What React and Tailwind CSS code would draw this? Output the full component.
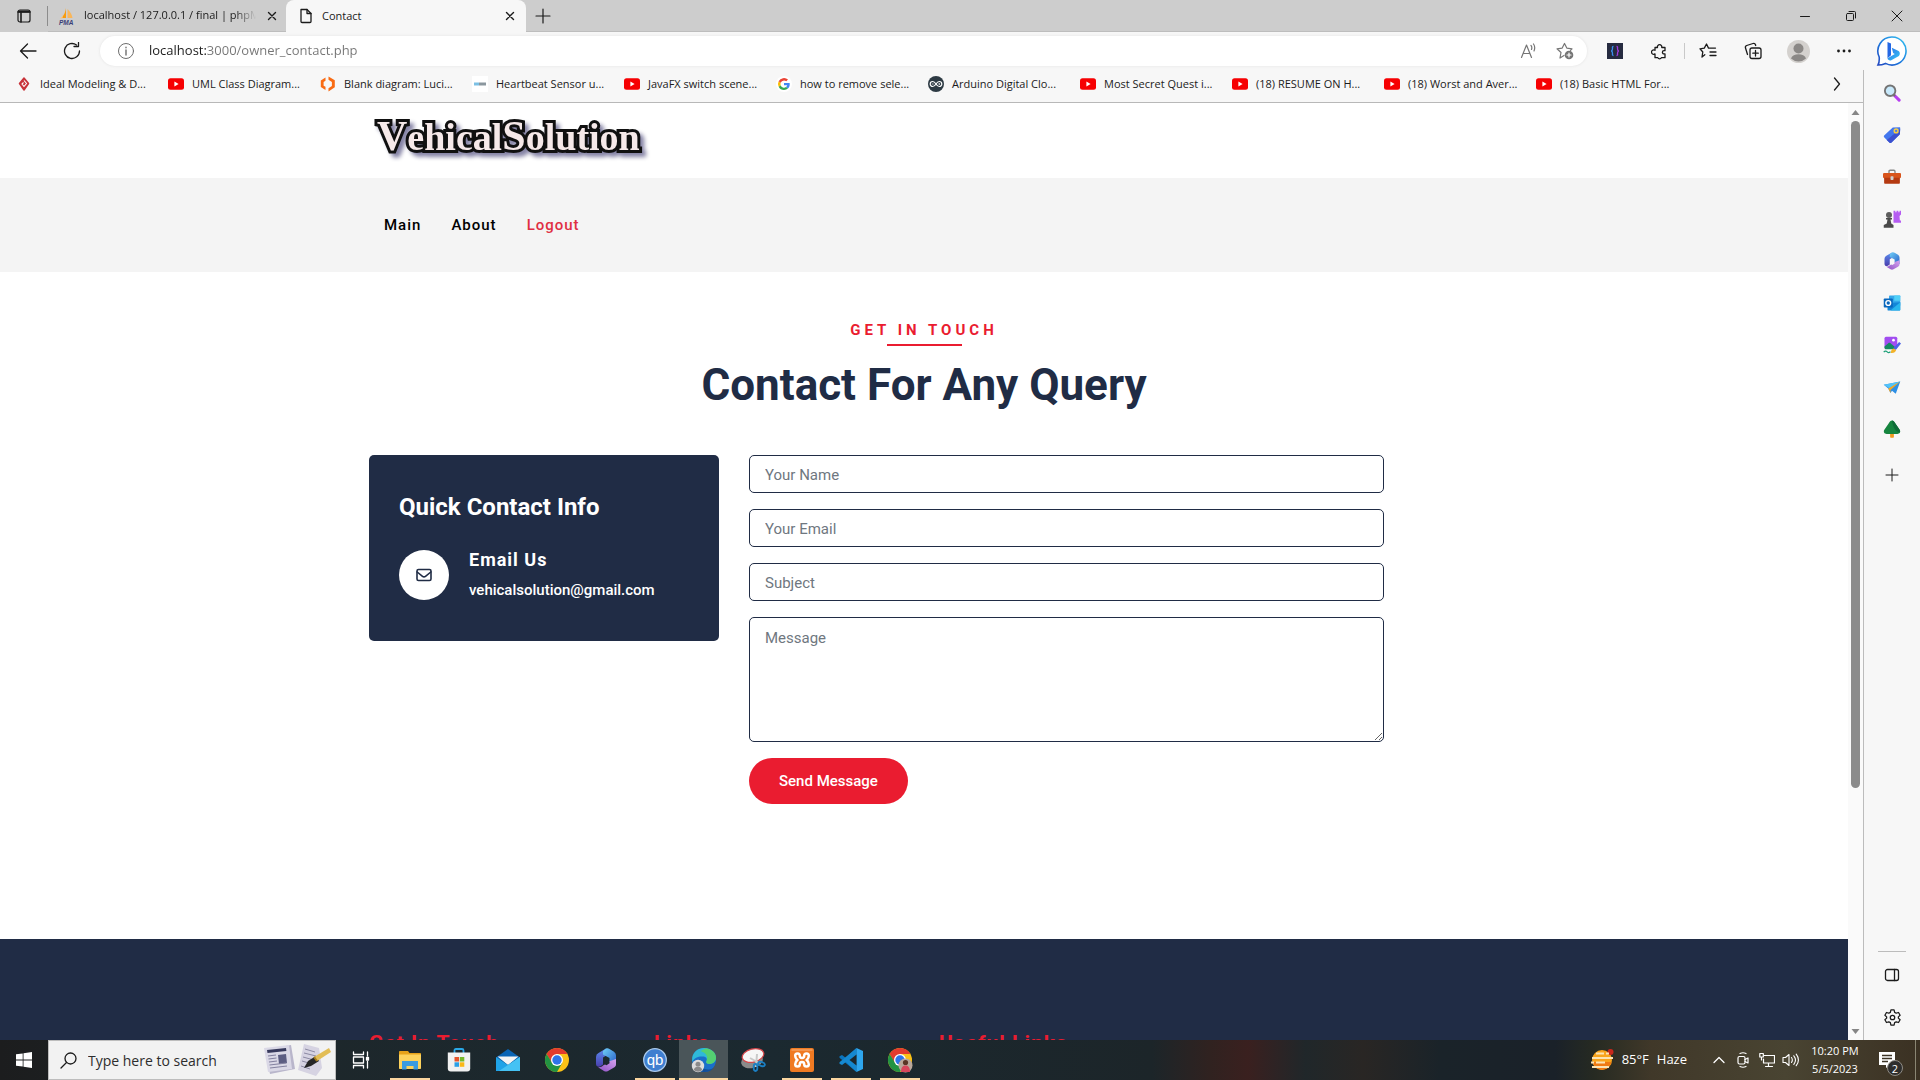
import React from "react";

/* ---------- shared helpers ---------- */

function Line({ size = 16, box = 16, w = 1, children, className = "" }) {
  return (
    <svg
      width={size}
      height={size}
      viewBox={`0 0 ${box} ${box}`}
      fill="none"
      stroke="currentColor"
      strokeWidth={w}
      strokeLinecap="round"
      strokeLinejoin="round"
      className={"shrink-0 " + className}
      aria-hidden="true"
    >
      {children}
    </svg>
  );
}

function Art({ size = 18, box = 24, children }) {
  return (
    <svg width={size} height={size} viewBox={`0 0 ${box} ${box}`} className="shrink-0" aria-hidden="true">
      {children}
    </svg>
  );
}

function IconButton({ label, className = "", children }) {
  return (
    <button type="button" aria-label={label} className={"flex shrink-0 items-center justify-center " + className}>
      {children}
    </button>
  );
}

/* ---------- tab strip ---------- */

function CloseGlyph() {
  return (
    <Line size={10} box={10} w={1.4}>
      <path d="M1.500 1.500l7 7M8.500 1.500l-7 7" />
    </Line>
  );
}

function PmaIcon() {
  return (
    <Art size={18} box={18}>
      <path d="M8 1v10H3.500C6 8 7.500 5 8 1z" fill="#f89c0e" />
      <path d="M9.500 2c3 3 4.500 6 5 9h-5z" fill="#f9b65a" />
      <path d="M5 6c0 2-1 4-3 5.500h2.500z" fill="#fbc77e" />
      <text x="1" y="17.500" fontSize="6.500" fontWeight="700" fontStyle="italic" fontFamily="Liberation Sans, sans-serif" fill="#3a3f78">
        PMA
      </text>
    </Art>
  );
}

function TabStrip() {
  return (
    <div className="flex h-8 shrink-0 items-stretch bg-[#cdcdcd] text-[#1b1b1b]">
      <IconButton label="Tab actions" className="w-[47px]">
        <Line size={16} w={1.2}>
          <rect x="2" y="2" width="12" height="12" rx="2" />
          <path d="M2 4h12M5 5v9" strokeWidth="1.6" />
          <path d="M3 3.500h10" strokeWidth="2" />
        </Line>
      </IconButton>
      <div className="my-1.5 w-px bg-[#8c8c8c]" />
      <div className="flex w-[238px] items-center border-b border-[#bdbdbd] pl-[10px]">
        <PmaIcon />
        <span className="ml-2 w-[172px] overflow-hidden whitespace-nowrap text-[11px] [mask-image:linear-gradient(90deg,#000_88%,transparent)]">
          localhost / 127.0.0.1 / final | phpM
        </span>
        <IconButton label="Close tab" className="ml-1.5 h-5 w-5">
          <CloseGlyph />
        </IconButton>
      </div>
      <div className="flex w-60 items-center rounded-t-lg bg-[#f7f7f7] pl-3">
        <Line size={16} w={1.3}>
          <path d="M3 1.500h6l4 4v8a1 1 0 0 1-1 1H4a1 1 0 0 1-1-1z" />
          <path d="M9 1.500v4h4" />
        </Line>
        <span className="ml-2 flex-1 text-[11px]">Contact</span>
        <IconButton label="Close tab" className="mr-1.5 h-5 w-5">
          <CloseGlyph />
        </IconButton>
      </div>
      <div className="flex flex-1 items-stretch border-b border-[#bdbdbd]">
        <IconButton label="New tab" className="w-[34px]">
          <Line size={16} w={1.2}>
            <path d="M8 1v14M1 8h14" />
          </Line>
        </IconButton>
        <div className="flex-1" />
        <IconButton label="Minimize" className="w-[46px]">
          <Line size={12} box={12}>
            <path d="M1.500 6.500h9" />
          </Line>
        </IconButton>
        <IconButton label="Restore" className="w-[46px]">
          <Line size={12} box={12}>
            <rect x="1.500" y="3.500" width="7" height="7" rx="1" />
            <path d="M4 1.500h5.500a1 1 0 0 1 1 1V8" />
          </Line>
        </IconButton>
        <IconButton label="Close window" className="w-[46px]">
          <Line size={12} box={12}>
            <path d="M1 1l10 10M11 1L1 11" />
          </Line>
        </IconButton>
      </div>
    </div>
  );
}

/* ---------- address bar row ---------- */

function BingIcon() {
  return (
    <svg width="32" height="32" viewBox="0 0 32 32" aria-hidden="true">
      <defs>
        <linearGradient id="bingRing" x1="1" y1="0" x2="0" y2="1">
          <stop offset="0" stopColor="#35c3f0" />
          <stop offset="0.5" stopColor="#1d7fe0" />
          <stop offset="1" stopColor="#2348c0" />
        </linearGradient>
        <linearGradient id="bingB" x1="0" y1="0" x2="1" y2="1">
          <stop offset="0" stopColor="#2b6ee8" />
          <stop offset="1" stopColor="#35c8f5" />
        </linearGradient>
      </defs>
      <path d="M16 2a14 14 0 1 1-6.500 26.400C7 29.500 4.500 30 2 30c1.200-2.200 1.500-4.400 1.200-8A14 14 0 0 1 16 2z" fill="#fff" stroke="url(#bingRing)" strokeWidth="1.600" />
      <path d="M11.500 7l3.500 1.400v11.800l-3.500 3z" fill="#2568e4" />
      <path d="M15.800 12.800l6.800 3.300c1.600 1.300 1.600 3.500.3 4.800l-7.600 4.300c-1.800.6-3.600-.3-3.800-2l7.300-4.200-1.700-1z" fill="url(#bingB)" />
    </svg>
  );
}

function AddressRow() {
  return (
    <div className="flex h-[38px] shrink-0 items-center bg-[#f7f7f7] pr-[3px] pl-1.5 text-[#1b1b1b]">
      <IconButton label="Back" className="h-8 w-11">
        <Line size={18} box={18} w={1.3}>
          <path d="M17 9H1.500M8.500 2L1.500 9l7 7" />
        </Line>
      </IconButton>
      <IconButton label="Refresh" className="h-8 w-11">
        <Line size={18} box={18} w={1.3}>
          <path d="M16.500 9A7.500 7.500 0 1 1 13.500 3" />
          <path d="M11 4.500h4.500V.500" />
        </Line>
      </IconButton>
      <div className="ml-1.5 flex h-[30px] flex-1 items-center rounded-full bg-white pl-[17px] shadow-[0_0_3px_#e2e2e2]">
        <Line size={18} box={18} className="text-[#6e6e6e]">
          <circle cx="9" cy="9" r="7.500" />
          <path d="M9 8v5M9 5.300v.4" strokeWidth="1.400" />
        </Line>
        <input
          type="text"
          aria-label="Address"
          defaultValue="localhost:3000/owner_contact.php"
          className="ml-3.5 min-w-0 flex-1 bg-[linear-gradient(90deg,#1b1b1b_57px,#757575_57px)] bg-clip-text text-[13px] text-transparent outline-none"
        />
        <IconButton label="Read aloud" className="w-9 text-[#757575]">
          <Line size={18} box={18} w={1.2}>
            <path d="M1.500 15.500L6.500 3l5 12.500M3.200 11.500h6.600M11 3.500c1 1 1 2.500.5 4M13.500 2c1.500 2 1.500 4.500.5 7" />
          </Line>
        </IconButton>
        <IconButton label="Add to favorites" className="mr-1 w-9 text-[#757575]">
          <Line size={18} box={18} w={1.2}>
            <path d="M8 13.500L4 16l1-5.500-4-3.700 5.200-.7L8.500 1.500l2.300 4.600 5.200.7-1.500 1.500" />
            <circle cx="13" cy="13" r="4.300" fill="currentColor" stroke="none" />
            <path d="M13 11v4M11 13h4" stroke="#fff" />
          </Line>
        </IconButton>
      </div>
      <IconButton label="Code extension" className="ml-2 w-10">
        <svg width="16" height="16" viewBox="0 0 16 16" fill="none" aria-hidden="true">
          <path d="M0 0h16v16H0z" fill="#262b40" />
          <path d="M6.500 3.500c-1.500 0-1 1-1 2.300 0 1.200-.3 2-1.300 2.200 1 .2 1.300 1 1.300 2.200 0 1.300-.5 2.300 1 2.300" stroke="#3b8ff0" strokeWidth="1.300" />
          <path d="M9.500 3.500c1.500 0 1 1 1 2.300 0 1.200.3 2 1.300 2.200-1 .2-1.300 1-1.300 2.200 0 1.300.5 2.300-1 2.300" stroke="#a03ae0" strokeWidth="1.300" />
        </svg>
      </IconButton>
      <IconButton label="Extensions" className="w-[49px]">
        <Line size={17} box={17} w={1.3}>
          <path d="M4 4.500h2.500a2.200 2.200 0 1 1 4.200 0H14v3.200h-1a1.500 1.500 0 0 0 0 3.200h1v3.800h-3.600a2 2 0 0 1-3.600 0H4v-3.800a2.200 2.200 0 1 1 0-3.600z" />
        </Line>
      </IconButton>
      <div className="h-4 w-px bg-[#c9c9c9]" />
      <IconButton label="Favorites" className="w-[46px]">
        <Line size={18} box={18} w={1.3}>
          <path d="M5.800 12.700L3 15l.8-5L1 6.800l4.300-.7L7.500 2l2 4.100h7M11 10h6M11 13.500h6" />
        </Line>
      </IconButton>
      <IconButton label="Collections" className="w-11">
        <Line size={18} box={18} w={1.3}>
          <rect x="6" y="6" width="11" height="10.500" rx="2" />
          <path d="M11.500 8.500v5.500M8.800 11.200h5.500M3.500 12.500L1.500 6a2 2 0 0 1 1.200-2.500L9 1.500a2 2 0 0 1 2.500 1.300l.2.700" />
        </Line>
      </IconButton>
      <IconButton label="Profile" className="w-[46px]">
        <svg width="23" height="23" viewBox="0 0 23 23" aria-hidden="true">
          <circle cx="11.500" cy="11.500" r="11.500" fill="#d4d1ce" />
          <circle cx="11.500" cy="8.500" r="5" fill="#8b8886" />
          <path d="M4 18.500C5 15.500 8 14.300 11.500 14.300s6.500 1.200 7.500 4.200a11 11 0 0 1-15 0z" fill="#8b8886" />
        </svg>
      </IconButton>
      <IconButton label="Settings and more" className="w-[46px]">
        <Art size={16} box={16}>
          <circle cx="2.500" cy="8" r="1.400" fill="#1b1b1b" />
          <circle cx="8" cy="8" r="1.400" fill="#1b1b1b" />
          <circle cx="13.500" cy="8" r="1.400" fill="#1b1b1b" />
        </Art>
      </IconButton>
      <IconButton label="Bing" className="w-[50px]">
        <BingIcon />
      </IconButton>
    </div>
  );
}

/* ---------- bookmarks ---------- */

function YouTubeIcon() {
  return (
    <Art size={16} box={16}>
      <rect x="0" y="2.300" width="16" height="11.400" rx="2.500" fill="#f60002" />
      <path d="M6.400 5.600v4.800L10.600 8z" fill="#fff" />
    </Art>
  );
}
function DiamondIcon() {
  return (
    <Art size={16} box={16}>
      <path d="M8 2l4.500 5.500L8 14 3.500 7.500z" fill="#c8333a" stroke="#c8333a" strokeWidth="1.500" strokeLinejoin="round" />
      <path d="M8 4.500L10.500 7.500 8 10.500 6 8l1.500-1.500" fill="none" stroke="#fff" strokeWidth="1.100" />
    </Art>
  );
}
function LucidIcon() {
  return (
    <Art size={16} box={16}>
      <path d="M5.500 1.500L.800 4.500v6.500l4.700 3v-3.200L3.600 9.700V5.900l1.900-1.200z" fill="#f96b13" />
      <path d="M8.500.500l6.300 3.800v7L8.500 15.500v-3.200l3.400-2.200V6L8.500 3.800z" fill="#f96b13" />
    </Art>
  );
}
function SensorIcon() {
  return (
    <Art size={16} box={16}>
      <path d="M0 0h16v16H0z" fill="#fff" />
      <path d="M2 6.500h5v3H2z" fill="#7cc0e4" />
      <path d="M7 6.500h7v3H7z" fill="#8b979e" />
    </Art>
  );
}
function GoogleIcon() {
  return (
    <Art size={16} box={24}>
      <circle cx="12" cy="12" r="12" fill="#fff" />
      <path d="M20.600 12.200c0-.6-.1-1.200-.2-1.800H12v3.500h4.800a4.100 4.100 0 0 1-1.800 2.700l2.900 2.300c1.700-1.600 2.700-3.900 2.700-6.700z" fill="#4285f4" />
      <path d="M12 21c2.400 0 4.500-.8 5.900-2.200L15 16.600a5.400 5.400 0 0 1-8-2.800l-3 2.300A9 9 0 0 0 12 21z" fill="#34a853" />
      <path d="M7 13.800a5.300 5.300 0 0 1 0-3.500L4 8a9 9 0 0 0 0 8.100z" fill="#fbbc05" />
      <path d="M12 6.600c1.300 0 2.500.4 3.400 1.300L18 5.400A9 9 0 0 0 4 8l3 2.300a5.400 5.400 0 0 1 5-3.700z" fill="#ea4335" />
    </Art>
  );
}
function ArduinoIcon() {
  return (
    <Art size={16} box={16}>
      <circle cx="8" cy="8" r="8" fill="#2d3a43" />
      <path d="M8 8C6.800 6.200 5.800 5.500 4.700 5.500a2.500 2.500 0 0 0 0 5C5.800 10.500 6.800 9.800 8 8s2.200-2.500 3.300-2.500a2.500 2.500 0 0 1 0 5C10.200 10.500 9.200 9.800 8 8z" fill="none" stroke="#fff" strokeWidth="1.200" />
      <path d="M3.800 8h1.800M10.400 8h1.800M11.300 7.100v1.800" stroke="#fff" strokeWidth=".7" />
    </Art>
  );
}

const bookmarks = [
  ["Ideal Modeling & D...", DiamondIcon],
  ["UML Class Diagram...", YouTubeIcon],
  ["Blank diagram: Luci...", LucidIcon],
  ["Heartbeat Sensor u...", SensorIcon],
  ["JavaFX switch scene...", YouTubeIcon],
  ["how to remove sele...", GoogleIcon],
  ["Arduino Digital Clo...", ArduinoIcon],
  ["Most Secret Quest i...", YouTubeIcon],
  ["(18) RESUME ON H...", YouTubeIcon],
  ["(18) Worst and Aver...", YouTubeIcon],
  ["(18) Basic HTML For...", YouTubeIcon],
];

function Bookmarks() {
  return (
    <nav aria-label="Favorites bar" className="flex h-[33px] shrink-0 items-center border-b border-[#b8b8b8] bg-[#f7f7f7] pb-1 pl-4 text-[11px] text-[#1b1b1b]">
      {bookmarks.map(([label, Icon]) => (
        <a key={label} href="#" className="flex w-[152px] items-center gap-2 whitespace-nowrap">
          <Icon />
          {label}
        </a>
      ))}
      <div className="flex-1" />
      <IconButton label="More favorites" className="mr-4 w-5">
        <Line size={14} box={14} w={1.3}>
          <path d="M4.500 1l5 6-5 6" />
        </Line>
      </IconButton>
    </nav>
  );
}

/* ---------- web page ---------- */

const fieldClass =
  "block w-full rounded-[5px] border border-[#202c45] bg-white px-[15px] text-[15px] text-[#202c45] placeholder-[#6f7780] outline-none";

function Field({ label, type = "text" }) {
  return <input type={type} aria-label={label} placeholder={label} className={fieldClass + " h-[38px] pt-0.5"} />;
}

function Container({ className = "", children }) {
  return <div className={"mx-auto w-full max-w-[1140px] px-[15px] " + className}>{children}</div>;
}

function WebPage() {
  return (
    <div className="min-w-0 flex-1 overflow-hidden bg-white font-[Roboto,sans-serif]">
      <header>
        <Container className="flex h-[75px] items-center">
          <a
            href="#"
            className="ml-2 pb-2.5 font-['Liberation_Serif',serif] text-[38px] leading-none font-bold text-[#f6e9e9] drop-shadow-[4px_4px_2px_#8583a5] [-webkit-text-stroke:6px_#101010] [paint-order:stroke_fill]"
          >
            <span className="text-[42px]">V</span>ehical<span className="text-[42px]">S</span>olution
          </a>
        </Container>
        <div className="bg-[#f4f4f4]">
          <Container className="flex h-[94px] items-center">
            <nav className="flex gap-[30px] pt-px pl-[15px] text-[15px] font-medium tracking-[1px] text-black">
              <a href="#">Main</a>
              <a href="#">About</a>
              <a href="#" className="text-[#e02f42]">
                Logout
              </a>
            </nav>
          </Container>
        </div>
      </header>

      <main>
        <Container className="pb-[135px]">
          <div className="flex flex-col items-center pt-[46px] text-center">
            <p className="text-[15px] leading-6 font-bold tracking-[4px] text-[#ea1c30]">GET IN TOUCH</p>
            <div className="mt-0.5 h-0.5 w-[75px] bg-[#ea1c30]" />
            <h1 className="mt-3 text-[44px] leading-[54px] font-bold text-[#202c45]">Contact For Any Query</h1>
          </div>

          <div className="mt-[43px] flex items-start gap-[30px]">
            <aside className="w-[350px] shrink-0 rounded-[5px] bg-[#202c45] px-[30px] pt-9 pb-[41px] text-white">
              <h2 className="text-[24px] leading-8 font-bold">Quick Contact Info</h2>
              <div className="mt-[27px] flex h-[50px] items-center gap-5">
                <div className="flex h-[50px] w-[50px] items-center justify-center rounded-full bg-white text-[#202c45]">
                  <Line size={16} w={1.6}>
                    <rect x="1" y="2.500" width="14" height="11" rx="1.500" />
                    <path d="M1.200 5l5.300 4.300c.9.700 2.100.7 3 0L14.800 5" />
                  </Line>
                </div>
                <div>
                  <h3 className="text-[18px] leading-[30px] font-bold tracking-[1px]">Email Us</h3>
                  <p className="text-[15px] leading-[30px] font-medium">vehicalsolution@gmail.com</p>
                </div>
              </div>
            </aside>

            <form className="w-[635px] space-y-4" onSubmit={(e) => e.preventDefault()}>
              <Field label="Your Name" />
              <Field label="Your Email" type="email" />
              <Field label="Subject" />
              <textarea aria-label="Message" placeholder="Message" className={fieldClass + " h-[125px] resize-y py-2 leading-6"} />
              <button type="submit" className="h-[46px] rounded-full bg-[#ea1c30] px-[30px] text-[15px] font-medium text-white">
                Send Message
              </button>
            </form>
          </div>
        </Container>
      </main>

      <footer className="bg-[#202c45]">
        <Container className="grid grid-cols-4 gap-[30px] pt-[88px] pb-24 text-[21px] leading-8 font-bold tracking-[1px] text-[#ea1c30]">
          <h3>Get In Touch</h3>
          <h3>Links</h3>
          <h3>Useful Links</h3>
        </Container>
      </footer>
    </div>
  );
}

function ScrollBar() {
  return (
    <div className="flex w-[15px] shrink-0 flex-col items-center bg-[#fafafa]" aria-hidden="true">
      <div className="flex h-[18px] items-center">
        <Art size={9} box={9}>
          <path d="M.5 7l4-5 4 5z" fill="#868686" />
        </Art>
      </div>
      <div className="flex w-full flex-1 flex-col items-center">
        <div className="h-[74%] w-[9px] rounded-full bg-[#8b8b8b]" />
      </div>
      <div className="flex h-[18px] items-center">
        <Art size={9} box={9}>
          <path d="M.5 2l4 5 4-5z" fill="#868686" />
        </Art>
      </div>
    </div>
  );
}

/* ---------- browser side rail ---------- */

function OfficeIcon({ size = 18, id }) {
  return (
    <Art size={size} box={24}>
      <defs>
        <linearGradient id={id + "a"} x1="0" y1="0" x2="0" y2="1">
          <stop offset="0" stopColor="#5b8def" />
          <stop offset="1" stopColor="#4a3fae" />
        </linearGradient>
        <linearGradient id={id + "b"} x1="0" y1="0" x2="1" y2="1">
          <stop offset="0" stopColor="#6fd0f7" />
          <stop offset="1" stopColor="#2a5fc9" />
        </linearGradient>
        <linearGradient id={id + "c"} x1="0" y1="1" x2="1" y2="0">
          <stop offset="0" stopColor="#8e4fc4" />
          <stop offset="1" stopColor="#d6a4ef" />
        </linearGradient>
      </defs>
      <path d="M12 .500L4.500 5A4.500 4.500 0 0 0 2 9v7c0 2.500 2.500 3.300 4.500 2.200L9 16.500V9.500l5-3z" fill={"url(#" + id + "a)"} />
      <path d="M12 .500c1.500-.5 2.500-.2 3.500.4L20 3.700A4.500 4.500 0 0 1 22 7.500V16l-6.500-2V10L9 6.500V3z" fill={"url(#" + id + "b)"} />
      <path d="M22 11v5.500c0 1.300-.8 2.300-2 3L14 23c-1.300.7-2.700.7-4 0l-6-3.800c2.500.3 4-.7 5-1.700l2-1 1.500.8 3-2v-2z" fill={"url(#" + id + "c)"} />
    </Art>
  );
}

const railItems = [
  [
    "Search",
    <Art>
      <path d="M15 15l6.500 6.500" stroke="#b63df0" strokeWidth="4" strokeLinecap="round" />
      <path d="M14 14l2 2" stroke="#707070" strokeWidth="3" />
      <circle cx="9.500" cy="9" r="7" fill="#c8e9fb" stroke="#747474" strokeWidth="2.500" />
    </Art>,
  ],
  [
    "Shopping",
    <Art>
      <path d="M13 2l9-.5c.8 0 1 .2 1 1L22.500 11 11 22.300c-.7.7-1.500.7-2.200 0L1.500 15c-.7-.7-.7-1.500 0-2.200z" fill="#4377ee" />
      <path d="M22.500 11L11 22.300c-.7.700-1.500.7-2.200 0L5 18.500 22.900 4z" fill="#3c50cf" />
      <circle cx="17.500" cy="6.500" r="2.500" fill="#4a7be8" stroke="#f7ce45" strokeWidth="2" />
    </Art>,
  ],
  [
    "Tools",
    <Art>
      <path d="M8 7V4.500C8 3.500 8.500 3 9.500 3h5c1 0 1.500.5 1.500 1.500V7" fill="none" stroke="#858585" strokeWidth="1.800" />
      <rect x="0" y="6.500" width="24" height="7" rx="1.500" fill="#d8541c" />
      <path d="M1.500 13h21v6.500c0 .8-.7 1.500-1.500 1.500H3c-.8 0-1.500-.7-1.500-1.500z" fill="#b53a12" />
      <rect x="10" y="11" width="4" height="5" rx="1" fill="#cfcfcf" />
    </Art>,
  ],
  [
    "Games",
    <Art>
      <path d="M14 1h2.500v2H18V1h2.500v2H22V1h2v5l-2 2 .5 6H24v3H14z" fill="#b55cf2" />
      <circle cx="8" cy="6.500" r="4" fill="#5d5d5d" />
      <path d="M4 10.500h8v2h-2l1 5.500 3 2v3.500H1V20l4-2 1-5.500H4z" fill="#4a4a4a" />
    </Art>,
  ],
  ["Microsoft 365", <OfficeIcon id="rail" />],
  [
    "Outlook",
    <Art>
      <rect x="8" y="2" width="15" height="14" rx="1" fill="#35a8ea" />
      <path d="M15 2h8v7h-8z" fill="#50d0f8" />
      <path d="M6 12l17-1v10c0 .8-.5 1-1 1H7c-.8 0-1-.5-1-1z" fill="#1386d8" />
      <path d="M23 11L10 22h12c.7 0 1-.4 1-1z" fill="#28b6ee" />
      <rect x="1" y="6" width="12" height="12" rx="1" fill="#0967bd" />
      <circle cx="7" cy="12" r="3.200" fill="none" stroke="#fff" strokeWidth="1.900" />
    </Art>,
  ],
  [
    "Image creator",
    <Art>
      <rect x="2" y="1" width="17" height="16" rx="2" fill="#a14df0" />
      <circle cx="14" cy="5.500" r="1.800" fill="#fff" />
      <path d="M2 14l5-4.500c1-.8 2-.8 3 0l6 5v3H4c-1.200 0-2-.8-2-2z" fill="#138a61" />
      <path d="M1 21.500c2-2.500 4-1 5 0s2 1 4-.5" fill="none" stroke="#1da078" strokeWidth="1.700" />
      <path d="M14 16l7.500-8L24 10l-7 8.500z" fill="#4c62e8" />
      <path d="M10.500 22.500c0-3 1-5.500 4-6L17.500 19c-1 2.500-3 4-7 3.500z" fill="#f3b32a" />
    </Art>,
  ],
  [
    "Drop",
    <Art>
      <path d="M1 9L23 4.500 17 21l-5-4-2 3-3-6z" fill="#2d8fe5" />
      <path d="M1 9L23 4.500 9 14z" fill="#52c3f8" />
      <path d="M7 14L23 4.500 10 16v4z" fill="#f5a623" />
    </Art>,
  ],
  [
    "Tree",
    <Art>
      <rect x="9.500" y="16" width="5" height="7.500" rx="1" fill="#f19a1f" />
      <path d="M12 .500c1.800 0 3 1.500 4.500 4.200l5.700 8.300c1.800 3-.2 5.500-3 5.500H4.800c-2.800 0-4.800-2.500-3-5.500l5.700-8.300C9 2 10.200.500 12 .500z" fill="#16853f" />
      <path d="M12 .500c1.800 0 3 1.500 4.500 4.200l5.700 8.300c.8 1.500.8 2.600.2 3.700-5-.7-9.400-6.700-10.400-16.200z" fill="#0f6b38" />
    </Art>,
  ],
];

function SideRail() {
  return (
    <aside className="flex w-[57px] shrink-0 flex-col items-center border-l border-[#bcbcbc] bg-[#f7f7f7] pt-0.5 pb-0.5 text-[#1b1b1b]">
      {railItems.map(([label, icon]) => (
        <IconButton key={label} label={label} className="h-[42px] w-full">
          {icon}
        </IconButton>
      ))}
      <IconButton label="Customize" className="mt-1 h-[42px] w-full">
        <Line size={14} box={14}>
          <path d="M7 1v12M1 7h12" />
        </Line>
      </IconButton>
      <div className="flex-1" />
      <div className="mb-0.5 h-px w-7 bg-[#bcbcbc]" />
      <IconButton label="Side pane" className="h-[42px] w-full">
        <Line size={16} w={1.3}>
          <rect x="1.500" y="2.500" width="13" height="11" rx="2" />
          <path d="M10.500 2.500v11" />
        </Line>
      </IconButton>
      <IconButton label="Settings" className="h-[42px] w-full">
        <Line size={19} box={24} w={1.6}>
          <circle cx="12" cy="12" r="2.800" />
          <path d="M10 2.500h4l.7 3 2 1.100 2.900-.9 2 3.500-2.200 2v1.600l2.200 2-2 3.500-2.900-.9-2 1.100-.7 3h-4l-.7-3-2-1.100-2.900.9-2-3.500 2.200-2v-1.600l-2.200-2 2-3.500 2.900.9 2-1.100z" />
        </Line>
      </IconButton>
    </aside>
  );
}

/* ---------- taskbar ---------- */

function ChromeIcon({ badge }) {
  return (
    <Art size={26} box={26}>
      <circle cx="13" cy="13" r="12" fill="#fbc116" />
      <path d="M23.400 7H13l-5.200 9L2.600 7A12 12 0 0 1 23.400 7z" fill="#e33b2e" />
      <path d="M2.600 7A12 12 0 0 0 13 25l5.200-9h-10z" fill="#229342" />
      <circle cx="13" cy="13" r="6" fill="#fff" />
      <circle cx="13" cy="13" r="4.700" fill="#2e74e8" />
      {badge && (
        <g>
          <circle cx="18.500" cy="18.500" r="7" fill="#b9a79b" />
          <path d="M14 25c0-5 2-6.500 4.500-6.500S23 20 23 25z" fill="#d8465c" />
          <circle cx="18.500" cy="15.500" r="2.600" fill="#5a3526" />
        </g>
      )}
    </Art>
  );
}

const taskApps = [
  [
    "Task View",
    null,
    <Line size={18} box={18} w={1.3} className="text-white">
      <path d="M1.500 1v2.500h10V1M1.500 17v-2.500h10V17M1.500 6h10v6h-10zM15.500 1v4M15.500 10.500V17" />
      <path d="M14.500 6.500h2v2.500h-2z" fill="currentColor" />
    </Line>,
  ],
  [
    "File Explorer",
    "w-10",
    <Art size={24} box={24}>
      <path d="M1 4c0-.8.500-1 1-1h8l1.500 2H22c.6 0 1 .4 1 1v14H1z" fill="#e6a21a" />
      <path d="M1 6.500h22V20c0 .6-.4 1-1 1H2c-.6 0-1-.4-1-1z" fill="#fcd25d" />
      <path d="M4 13h16v8.500h-4.500V18h-7v3.500H4z" fill="#3b9be0" />
    </Art>,
  ],
  [
    "Microsoft Store",
    null,
    <Art size={24} box={24}>
      <path d="M7.500 6V2.500C7.500 1.600 8 1 9 1h6c1 0 1.500.6 1.500 1.500V6" fill="none" stroke="#2aa7e6" strokeWidth="1.800" />
      <path d="M.800 4.500h22.400v16a3 3 0 0 1-3 3H3.800a3 3 0 0 1-3-3z" fill="#f1f1f1" />
      <path d="M7.500 9H12v4.500H7.500z" fill="#e4542c" />
      <path d="M12.800 9h4.500v4.500h-4.500z" fill="#76b82a" />
      <path d="M7.500 14.300H12v4.500H7.500z" fill="#2a9fe6" />
      <path d="M12.800 14.300h4.500v4.500h-4.500z" fill="#fab818" />
    </Art>,
  ],
  [
    "Mail",
    null,
    <Art size={24} box={24}>
      <path d="M0 9.500L12 1l12 8.500L12 17z" fill="#0a64b4" />
      <path d="M1.500 8.500h21L12 17z" fill="#f4f4f4" />
      <path d="M0 9l12 8L24 9v14H0z" fill="#1fa3e8" />
      <path d="M24 9v14H3l9-6z" fill="#45c2f4" />
    </Art>,
  ],
  ["Chrome", null, <ChromeIcon />],
  ["Microsoft 365", null, <OfficeIcon size={24} id="task" />],
  [
    "qBittorrent",
    "w-10",
    <Art size={24} box={24}>
      <circle cx="12" cy="12" r="11.300" fill="#3f7fd0" stroke="#a9c9ec" strokeWidth="1.300" />
      <text x="12" y="16.500" textAnchor="middle" fontSize="15" fontFamily="Liberation Sans, sans-serif" fill="#fff">
        qb
      </text>
    </Art>,
  ],
  [
    "Edge",
    "w-full",
    <Art size={26} box={26}>
      <circle cx="13" cy="13" r="12" fill="#1a6fc9" />
      <path d="M1.200 11C2 5 7 1 13 1c7 0 12 4.500 12 9.500 0 4-3 6.500-6.500 6.500-3 0-4-1.500-3-3 .8-1.200.5-4-3-4.500C8 9 3.500 10 1.200 15z" fill="#2fb9d8" />
      <path d="M15 1.200c6 .8 10 5 10 9.300 0 4-3 6.500-6.500 6.500-3 0-4-1.500-3-3 1.500-3 1-8-6-10z" fill="#5bd45f" opacity=".85" />
      <path d="M9 12c-2 6 3 11 9 10.500 2-.2 4-1 5-2C21 23.500 17 25.500 12 25 6 24 6 15 9 12z" fill="#12509c" />
      <circle cx="7" cy="19" r="6.200" fill="#dcdcdc" />
      <circle cx="7" cy="17.300" r="2.500" fill="#8a8a8a" />
      <path d="M2.800 23c.5-2.500 2-3 4.200-3s3.700.5 4.200 3a6 6 0 0 1-8.400 0z" fill="#8a8a8a" />
    </Art>,
  ],
  [
    "Snipping Tool",
    null,
    <Art size={26} box={26}>
      <ellipse cx="12" cy="14" rx="11" ry="7" fill="#8b8b8b" transform="rotate(-14 12 14)" />
      <ellipse cx="13" cy="8.500" rx="11" ry="6.500" fill="#f6f6f6" stroke="#d8484c" strokeWidth="1.200" transform="rotate(-14 13 8.500)" />
      <path d="M10 11l9 5M17 7l-1 13" stroke="#c9c9c9" strokeWidth="2" />
      <ellipse cx="15.500" cy="20.500" rx="1.900" ry="3.500" fill="none" stroke="#1b7fc4" strokeWidth="1.800" />
      <ellipse cx="21.500" cy="17" rx="3.500" ry="1.900" fill="none" stroke="#1b7fc4" strokeWidth="1.800" transform="rotate(20 21.500 17)" />
    </Art>,
  ],
  [
    "XAMPP",
    "w-10",
    <Art size={24} box={24}>
      <rect x="0" y="0" width="24" height="24" rx="2" fill="#f07a22" />
      <path d="M1.500 2h21" stroke="#f8b27c" strokeWidth="1" />
      <path
        d="M7.500 5.500a2.300 2.300 0 0 0-2.300 2.300c0 2 .8 3 2 4.200-1.200 1.200-2 2.200-2 4.200a2.300 2.300 0 0 0 4.600 0c0-1.700.7-2.200 2.200-2.200s2.200.5 2.200 2.200a2.300 2.300 0 0 0 4.600 0c0-2-.8-3-2-4.200 1.200-1.200 2-2.200 2-4.200a2.300 2.300 0 0 0-4.600 0c0 1.700-.7 2.200-2.200 2.200s-2.200-.5-2.200-2.200a2.300 2.300 0 0 0-2.300-2.300z"
        fill="none"
        stroke="#fff"
        strokeWidth="2.500"
      />
    </Art>,
  ],
  [
    "Visual Studio Code",
    "w-10",
    <Art size={24} box={24}>
      <path d="M17.500 0L7 10 3 7 .500 8.200v1.600L17.500 24z" fill="#0a74be" />
      <path d="M17.500 24L7 14l-4 3-2.500-1.200v-1.600L17.500 0z" fill="#1588d0" />
      <path d="M17.500 0L24 3v18l-6.500 3z" fill="#2ea6ee" />
      <path d="M17.500 6.500v11L10.500 12z" fill="#1b282e" />
    </Art>,
  ],
  ["Chrome profile", "w-10", <ChromeIcon badge />],
];

function SearchArt() {
  return (
    <svg width="70" height="34" viewBox="0 0 70 34" aria-hidden="true">
      <path d="M2 7l26-5 4 24-25 5z" fill="#b9b6cb" />
      <path d="M1 5l25-3 3 24-24 3z" fill="#dad8e6" />
      <path d="M4 7l19-2 .4 3L4.500 10z" fill="#37395c" />
      <path d="M15 12l8-1 1 9-8 1z" fill="#5c5d82" />
      <path d="M5 13l8-1M5.500 16l8-1M6 19l8-1M6.500 22l17-2M7 25l17-2" stroke="#8482a0" strokeWidth="1.200" />
      <path d="M41 1l15 4 3 20-6 8-18-6z" fill="#d6d3e2" />
      <path d="M42 6l10 3M41 10l12 3M40 14l11 3M39 18l10 3M38 23l9 3" stroke="#8b89a3" strokeWidth="1" />
      <path d="M41 25l4-7 8-5 3 5-8 5z" fill="#262626" />
      <path d="M51 14l15-9 2 4-14 9z" fill="#e2bd55" />
      <path d="M51 14l3 4" stroke="#a27b1f" strokeWidth="2" />
    </svg>
  );
}

function Taskbar() {
  return (
    <footer className="flex h-10 shrink-0 items-stretch bg-[linear-gradient(90deg,#1c1d1e_0%,#1d272b_17%,#1b2930_40%,#1c2529_60%,#302220_63%,#3a201f_65%,#20272a_68%,#292624_71%,#1a2329_75%,#1a2129_81%,#262a22_83%,#403829_86%,#494432_93%,#3b3123_100%)] text-white">
      <IconButton label="Start" className="w-12">
        <Art size={16} box={16}>
          <path d="M0 2.300l6.700-.9v6.200H0zM7.500 1.300L16 0v7.600H7.500zM0 8.400h6.700v6.200L0 13.700zM7.500 8.400H16V16l-8.500-1.300z" fill="#fff" />
        </Art>
      </IconButton>
      <div className="flex w-72 items-center border border-[#bdbdbd] bg-[#f2f2f2] pr-0.5 pl-[11px] text-[#1b1b1b]">
        <Line size={17} box={17} w={1.3}>
          <circle cx="10.500" cy="6.500" r="5.500" />
          <path d="M6.500 10.500L1 16" />
        </Line>
        <input
          type="text"
          aria-label="Search"
          placeholder="Type here to search"
          className="ml-[11px] min-w-0 flex-1 bg-transparent text-[14px] placeholder-[#2d2d2d] outline-none"
        />
        <SearchArt />
      </div>
      <div className="flex">
        {taskApps.map(([label, bar, icon]) => (
          <button
            key={label}
            type="button"
            aria-label={label}
            className={"relative flex w-[49px] items-center justify-center " + (bar === "w-full" ? "bg-[#4a5559]" : "")}
          >
            {icon}
            {bar && <span className={"absolute inset-x-0 bottom-0 mx-auto h-0.5 bg-[#fbd6a0] " + bar} />}
          </button>
        ))}
      </div>
      <div className="flex-1" />
      <button type="button" className="flex items-center pr-5 text-[13px]">
        <svg width="24" height="24" viewBox="0 0 24 24" className="mr-2" aria-hidden="true">
          <circle cx="12" cy="12" r="10" fill="#f9a41b" />
          <path d="M2.500 14h19A10 10 0 0 1 5 19z" fill="#ef7a12" />
          <circle cx="20.500" cy="4" r="3" fill="#c8281c" />
          <path d="M6 5.500h8M16 5.500h3M2 10h21M1 14.500h3M6 14.500h9M2 19h17" stroke="#fbe3b3" strokeWidth="1.800" />
        </svg>
        <span>85°F</span>
        <span className="ml-2">Haze</span>
      </button>
      <IconButton label="Show hidden icons" className="w-6">
        <Line size={14} box={14} w={1.3}>
          <path d="M2 9.500l5-5 5 5" />
        </Line>
      </IconButton>
      <IconButton label="Meet now" className="w-6">
        <Line size={16} w={1.2}>
          <rect x="3" y="4.500" width="7" height="7.500" rx="1.500" />
          <path d="M10 7.500l3-1.500v5l-3-1.500M5 1.500c2-1 4-1 6 0M5 14.500c2 1 4 1 6 0" />
        </Line>
      </IconButton>
      <IconButton label="Network" className="w-6">
        <Line size={16} w={1.2}>
          <path d="M5 3.500h10.500v7.500h-11V7M9.500 11v3M6.500 14.500h7" />
          <path d="M.800 1.500h3.500v3.500H.800zM2.500 5v3" />
        </Line>
      </IconButton>
      <IconButton label="Volume" className="w-6">
        <Line size={18} box={18} w={1.1}>
          <path d="M1 6.500h2.500L7 3.500v11l-3.500-3H1zM9.500 6.500c1 1.500 1 3.500 0 5M11.800 4.800c2 2.500 2 6 0 8.500M14.200 3.200c2.700 3.500 2.700 8 0 11.500" />
        </Line>
      </IconButton>
      <button type="button" className="flex w-16 flex-col items-center justify-center text-[11px] leading-[18px] whitespace-nowrap">
        <span>10:20 PM</span>
        <span>5/5/2023</span>
      </button>
      <button type="button" aria-label="Notifications" className="relative w-12 shrink-0">
        <svg width="16" height="16" viewBox="0 0 16 16" className="ml-3" aria-hidden="true">
          <path d="M0 0h16v13h-5l-4 3v-3H0z" fill="#fff" />
          <path d="M3 3.500h10M3 6.500h10M3 9.500h6" stroke="#3d3527" strokeWidth="1.300" />
        </svg>
        <span className="absolute right-3 bottom-1 flex h-4 w-4 items-center justify-center rounded-full border border-[#8e8b85] bg-[#2d2d2d] text-[11px] leading-none">
          2
        </span>
      </button>
      <div className="w-[5px] border-l border-[#8a8573]" />
    </footer>
  );
}

export default function App() {
  return (
    <div className="flex h-screen flex-col overflow-hidden bg-[#f7f7f7] font-['Open_Sans',sans-serif]">
      <TabStrip />
      <AddressRow />
      <div className="flex min-h-0 flex-1">
        <div className="flex min-w-0 flex-1 flex-col">
          <Bookmarks />
          <div className="flex min-h-0 flex-1">
            <WebPage />
            <ScrollBar />
          </div>
        </div>
        <SideRail />
      </div>
      <Taskbar />
    </div>
  );
}
